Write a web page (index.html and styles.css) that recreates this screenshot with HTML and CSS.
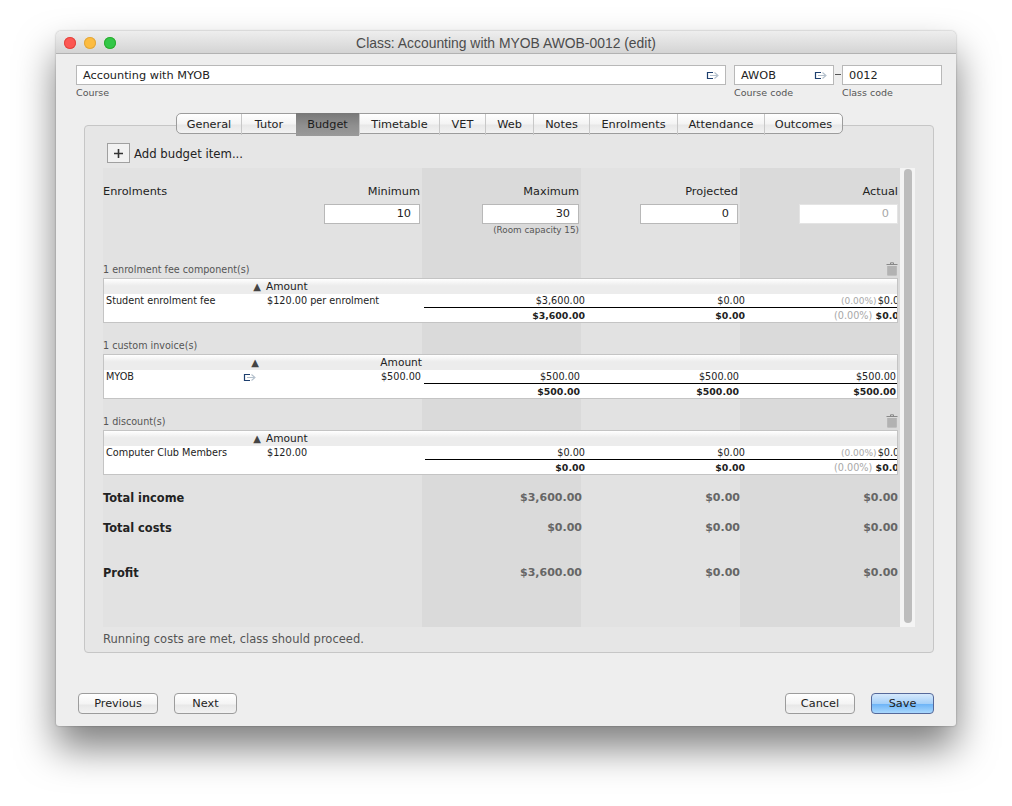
FILE: index.html
```html
<!DOCTYPE html>
<html>

  <head>

    <title>Class: Accounting with MYOB AWOB-0012 (edit)</title>

    <link rel="stylesheet" href="styles.css">

  </head>

  <body>

    <svg class="defs" width="0" height="0">
      <symbol id="goto" viewBox="0 0 14 9">
        <path d="M7 1.5H1.5V7.5H7" fill="none" stroke="#1d3f6e" stroke-width="1.2"/>
        <path d="M4 4.5H11M8.5 1.5L12 4.5L8.5 7.5" fill="none" stroke="#b4c0cc" stroke-width="1.1"/>
      </symbol>
      <symbol id="trash" viewBox="0 0 12 14">
        <path d="M4.5 2V0.8H7.5V2M0.5 2.5H11.5" fill="none" stroke="#888" stroke-width="1"/>
        <path d="M1.5 4H10.5V13.5H1.5Z" fill="#999"/>
        <path d="M3 4V13.5M5 4V13.5M7 4V13.5M9 4V13.5" stroke="#e2e2e2" stroke-width="0.7"/>
      </symbol>
    </svg>

    <div class="window">

      <div class="titlebar">
        <div class="lights">
          <span class="light red"></span>
          <span class="light yellow"></span>
          <span class="light green"></span>
        </div>
        <div class="title">Class: Accounting with MYOB AWOB-0012 (edit)</div>
      </div>

      <div class="fields">
        <div class="field course">
          <div class="box">Accounting with MYOB <svg class="goto"><use href="#goto"/></svg></div>
          <div class="caption">Course</div>
        </div>
        <div class="field code">
          <div class="box">AWOB <svg class="goto"><use href="#goto"/></svg></div>
          <div class="caption">Course code</div>
        </div>
        <div class="dash"></div>
        <div class="field code">
          <div class="box">0012</div>
          <div class="caption">Class code</div>
        </div>
      </div>

      <div class="tabs">
        <div class="tab">General</div>
        <div class="tab">Tutor</div>
        <div class="tab active">Budget</div>
        <div class="tab">Timetable</div>
        <div class="tab">VET</div>
        <div class="tab">Web</div>
        <div class="tab">Notes</div>
        <div class="tab">Enrolments</div>
        <div class="tab">Attendance</div>
        <div class="tab">Outcomes</div>
      </div>

      <div class="panel">

        <div class="add_row">
          <div class="add_button"><svg width="9" height="9" viewBox="0 0 9 9"><path d="M4.5 0V9M0 4.5H9" stroke="#333" stroke-width="1.6"/></svg></div>
          <div class="add_label">Add budget item...</div>
        </div>

        <div class="scroller">

          <div class="sheet">

            <div class="columns heading">
              <div class="left">Enrolments</div>
              <div>Minimum</div>
              <div>Maximum</div>
              <div>Projected</div>
              <div>Actual</div>
            </div>

            <div class="columns inputs">
              <div></div>
              <div><span class="number minimum">10</span></div>
              <div><span class="number">30</span></div>
              <div><span class="number projected">0</span></div>
              <div><span class="number disabled">0</span></div>
            </div>

            <div class="columns capacity">
              <div></div>
              <div></div>
              <div>(Room capacity 15)</div>
            </div>

            <div class="section">
              <div class="section_label">1 enrolment fee component(s) <svg class="trash"><use href="#trash"/></svg></div>
              <div class="grid">
                <div class="grid_head">
                  <div class="sort">&#9650;</div>
                  <div class="amount_head">Amount</div>
                </div>
                <div class="grid_row">
                  <div class="name">Student enrolment fee</div>
                  <div class="amount">$120.00 per enrolment</div>
                  <div class="cell c1">$3,600.00</div>
                  <div class="cell c2">$0.00</div>
                  <div class="cell clip"><span class="pct">(0.00%)</span> $0.00</div>
                </div>
                <div class="grid_row total">
                  <div class="name"></div>
                  <div class="amount"></div>
                  <div class="cell c1">$3,600.00</div>
                  <div class="cell c2">$0.00</div>
                  <div class="cell clip"><span class="pct">(0.00%)</span> $0.00</div>
                </div>
              </div>
            </div>

            <div class="section">
              <div class="section_label">1 custom invoice(s)</div>
              <div class="grid invoice">
                <div class="grid_head">
                  <div class="sort">&#9650;</div>
                  <div class="amount_head">Amount</div>
                </div>
                <div class="grid_row">
                  <div class="name">MYOB <svg class="goto"><use href="#goto"/></svg></div>
                  <div class="amount">$500.00</div>
                  <div class="cell c1">$500.00</div>
                  <div class="cell c2">$500.00</div>
                  <div class="cell c3">$500.00</div>
                </div>
                <div class="grid_row total">
                  <div class="name"></div>
                  <div class="amount"></div>
                  <div class="cell c1">$500.00</div>
                  <div class="cell c2">$500.00</div>
                  <div class="cell c3">$500.00</div>
                </div>
              </div>
            </div>

            <div class="section">
              <div class="section_label">1 discount(s) <svg class="trash"><use href="#trash"/></svg></div>
              <div class="grid discount">
                <div class="grid_head">
                  <div class="sort">&#9650;</div>
                  <div class="amount_head">Amount</div>
                </div>
                <div class="grid_row">
                  <div class="name">Computer Club Members</div>
                  <div class="amount">$120.00</div>
                  <div class="cell c1">$0.00</div>
                  <div class="cell c2">$0.00</div>
                  <div class="cell clip"><span class="pct">(0.00%)</span> $0.00</div>
                </div>
                <div class="grid_row total">
                  <div class="name"></div>
                  <div class="amount"></div>
                  <div class="cell c1">$0.00</div>
                  <div class="cell c2">$0.00</div>
                  <div class="cell clip"><span class="pct">(0.00%)</span> $0.00</div>
                </div>
              </div>
            </div>

            <div class="columns result income">
              <div class="left">Total income</div>
              <div></div>
              <div>$3,600.00</div>
              <div>$0.00</div>
              <div>$0.00</div>
            </div>

            <div class="columns result costs">
              <div class="left">Total costs</div>
              <div></div>
              <div>$0.00</div>
              <div>$0.00</div>
              <div>$0.00</div>
            </div>

            <div class="columns result profit">
              <div class="left">Profit</div>
              <div></div>
              <div>$3,600.00</div>
              <div>$0.00</div>
              <div>$0.00</div>
            </div>

          </div>

          <div class="scrollbar"><div class="thumb"></div></div>

        </div>

        <div class="status">Running costs are met, class should proceed.</div>

      </div>

      <div class="buttons">
        <div class="button previous">Previous</div>
        <div class="button next">Next</div>
        <div class="spacer"></div>
        <div class="button cancel">Cancel</div>
        <div class="button save">Save</div>
      </div>

    </div>

  </body>

</html>
```

FILE: styles.css
```css
body
{
  box-sizing: border-box;
  height: 806px;
  margin: 0;
  padding: 31px 0 0 56px;
  background: #ffffff;
  font-family: "DejaVu Sans", sans-serif;
  font-size: 11.3px;
  color: #222222;
}

.defs
{
  display: block;
}

.window
{
  width: 900px;
  height: 695px;
  background: #eeeeee;
  border-radius: 5px 5px 3px 3px;
  box-shadow: 0 22px 38px rgba(0, 0, 0, 0.5), 0 0 2px rgba(0, 0, 0, 0.35);
}

.titlebar
{
  display: flex;
  align-items: center;
  height: 20px;
  padding: 2px 8px 0 8px;
  background: linear-gradient(#eeeeee, #d4d4d4);
  border-bottom: 1px solid #b2b2b2;
  border-radius: 5px 5px 0 0;
}

.lights
{
  display: flex;
  gap: 8px;
  width: 60px;
}

.light
{
  width: 12px;
  height: 12px;
  border-radius: 50%;
}

.red
{
  background: #fc5753;
  box-shadow: inset 0 0 0 1px #e2463f;
}

.yellow
{
  background: #fdbc40;
  box-shadow: inset 0 0 0 1px #e1a73e;
}

.green
{
  background: #33c748;
  box-shadow: inset 0 0 0 1px #2dac2f;
}

.title
{
  flex: 1;
  margin-right: 60px;
  text-align: center;
  font-family: "Liberation Sans", sans-serif;
  font-size: 13.9px;
  color: #4c4c4c;
}

/* course and class code */

.fields
{
  display: flex;
  padding: 11px 0 0 20px;
}

.field
{
  width: 100px;
}

.course
{
  width: 650px;
  margin-right: 8px;
}

.box
{
  display: flex;
  align-items: center;
  justify-content: space-between;
  height: 18px;
  padding: 0 5px 0 6px;
  background: #ffffff;
  border: 1px solid #b8b8b8;
}

.dash
{
  width: 6px;
  height: 1px;
  margin: 9px 1px 0 1px;
  background: #555555;
}

.caption
{
  height: 12px;
  margin-top: 1px;
  padding-top: 1px;
  font-size: 9.5px;
  line-height: 12px;
  color: #555555;
}

.goto
{
  width: 14px;
  height: 9px;
}

/* tabs */

.tabs
{
  display: grid;
  grid-template-columns: 64px 55px 63px 80px 46px 48px 56px 88px 87px 78px;
  position: relative;
  width: 665px;
  height: 19px;
  margin: 14px 0 -9px 120px;
  background: linear-gradient(#ffffff, #f4f4f4 50%, #e8e8e8 60%, #f2f2f2);
  border: 1px solid #9c9c9c;
  border-radius: 5px;
}

.tab
{
  box-sizing: border-box;
  padding-top: 1px;
  text-align: center;
  line-height: 19px;
  border-left: 1px solid #c8c8c8;
}

.tab:first-child
{
  border-left: none;
}

.tab.active
{
  background: linear-gradient(#777777, #8f8f8f 55%, #9a9a9a);
  border-left: none;
  margin-top: -1px;
  margin-bottom: -1px;
  line-height: 22px;
  color: #1c1c1c;
}

/* budget panel */

.panel
{
  width: 812px;
  height: 526px;
  margin-left: 28px;
  padding: 0 18px;
  background: #e6e6e6;
  border: 1px solid #c6c6c6;
  border-radius: 4px;
}

.add_row
{
  display: flex;
  align-items: center;
  gap: 4px;
  height: 20px;
  margin: 0 0 5px 4px;
  padding-top: 17px;
}

.add_label
{
  margin-top: 1px;
  font-size: 11.7px;
}

.add_button
{
  display: flex;
  align-items: center;
  justify-content: center;
  width: 21px;
  height: 18px;
  background: #f2f2f2;
  border: 1px solid #a0a0a0;
}

.scroller
{
  display: flex;
  height: 459px;
}

.sheet
{
  width: 798px;
  background: linear-gradient(to right, #e2e2e2 319px, #dadada 319px, #dadada 478px, #e2e2e2 478px, #e2e2e2 637px, #dadada 637px);
}

.scrollbar
{
  width: 8px;
  padding: 1px 3px 0 4px;
  background: #f4f4f4;
}

.thumb
{
  height: 454px;
  background: #bdbdbd;
  border-radius: 4px;
}

.columns
{
  display: grid;
  grid-template-columns: 158px 159px 159px 159px 160px;
  width: 795px;
  text-align: right;
}

.columns .left
{
  text-align: left;
}

.heading
{
  padding-top: 17px;
  line-height: 14px;
}

.inputs
{
  margin-top: 5px;
  height: 20px;
}

.number
{
  display: inline-block;
  box-sizing: border-box;
  width: 97px;
  height: 20px;
  padding-right: 8px;
  line-height: 18px;
  background: #ffffff;
  border: 1px solid #b8b8b8;
}

.number.minimum
{
  width: 96px;
}

.number.projected
{
  width: 98px;
}

.number.disabled
{
  width: 99px;
  color: #a8a8a8;
  border-color: #e4e4e4;
}

.capacity
{
  height: 12px;
  font-size: 8.8px;
  line-height: 12px;
  color: #555555;
}

.section
{
  width: 795px;
  margin-top: 16px;
}

.capacity + .section
{
  margin-top: 27px;
}

.section_label
{
  display: flex;
  justify-content: space-between;
  height: 15px;
  font-size: 9.6px;
  line-height: 13px;
  color: #555555;
}

.trash
{
  width: 12px;
  height: 14px;
  margin-top: -1px;
}

/* small tables */

.grid
{
  height: 43px;
  background: #ffffff;
  border: 1px solid #c4c4c4;
  font-size: 9.7px;
  overflow: hidden;
}

.grid_head
{
  display: flex;
  height: 15px;
  line-height: 15px;
  font-size: 10.6px;
  background: linear-gradient(#ffffff, #ececec 45%, #ececec);
}

.sort
{
  width: 157px;
  font-size: 10px;
  text-align: right;
  color: #444444;
}

.amount_head
{
  margin-left: 5px;
}

.invoice .sort
{
  width: 155px;
}

.invoice .amount_head
{
  width: 163px;
  margin-left: 0;
  text-align: right;
}

.grid_row
{
  display: grid;
  grid-template-columns: 161px 159px 161px 160px 152px;
  height: 14px;
  line-height: 14px;
}

.total
{
  font-size: 9.4px;
  font-weight: bold;
  line-height: 16px;
}

.name
{
  display: flex;
  justify-content: space-between;
  align-items: flex-start;
  padding: 0 8px 0 2px;
}

.name .goto
{
  margin-top: 3px;
}

.amount
{
  padding-left: 2px;
}

.invoice .amount
{
  padding: 0 3px 0 0;
  text-align: right;
}

.cell
{
  box-sizing: border-box;
  height: 14px;
  white-space: nowrap;
  overflow: hidden;
  text-align: right;
}

.grid_row:not(.total) .cell
{
  border-bottom: 1px solid #000000;
}

.invoice .c1
{
  padding-right: 5px;
}

.invoice .c2
{
  padding-right: 6px;
}

.invoice .c3
{
  padding-right: 1px;
}

.discount .c1
{
  margin-left: 1px;
}

.clip
{
  text-align: left;
  padding-left: 96px;
}

.total .clip
{
  padding-left: 89px;
}

.pct
{
  margin-right: -2px;
  font-size: 9px;
  font-weight: normal;
  color: #a8a8a8;
}

.total .pct
{
  margin-right: 0;
  font-size: 9.7px;
}

.result
{
  grid-template-columns: 158px 160px 161px 158px 158px;
  font-size: 11px;
  font-weight: bold;
  line-height: 16px;
  color: #666666;
}

.result .left
{
  font-size: 11.4px;
  color: #222222;
}

.income
{
  margin-top: 15px;
}

.costs
{
  margin-top: 14px;
}

.profit
{
  margin-top: 29px;
}

.status
{
  margin-top: 5px;
  font-size: 11.5px;
  line-height: 14px;
  color: #555555;
}

/* bottom buttons */

.buttons
{
  display: flex;
  gap: 16px;
  margin: 40px 22px 0 22px;
}

.spacer
{
  flex: 1;
}

.button
{
  box-sizing: border-box;
  height: 21px;
  text-align: center;
  line-height: 19px;
  background: linear-gradient(#ffffff, #f4f4f4 50%, #e8e8e8 60%, #f2f2f2);
  border: 1px solid #9c9c9c;
  border-radius: 4px;
}

.previous
{
  width: 80px;
}

.next
{
  width: 63px;
}

.cancel
{
  width: 70px;
}

.save
{
  width: 63px;
  background: linear-gradient(#d6e9fc, #a6d0f8 50%, #6fb5f7 55%, #a9d8fd);
  border-color: #56699a;
}
```
